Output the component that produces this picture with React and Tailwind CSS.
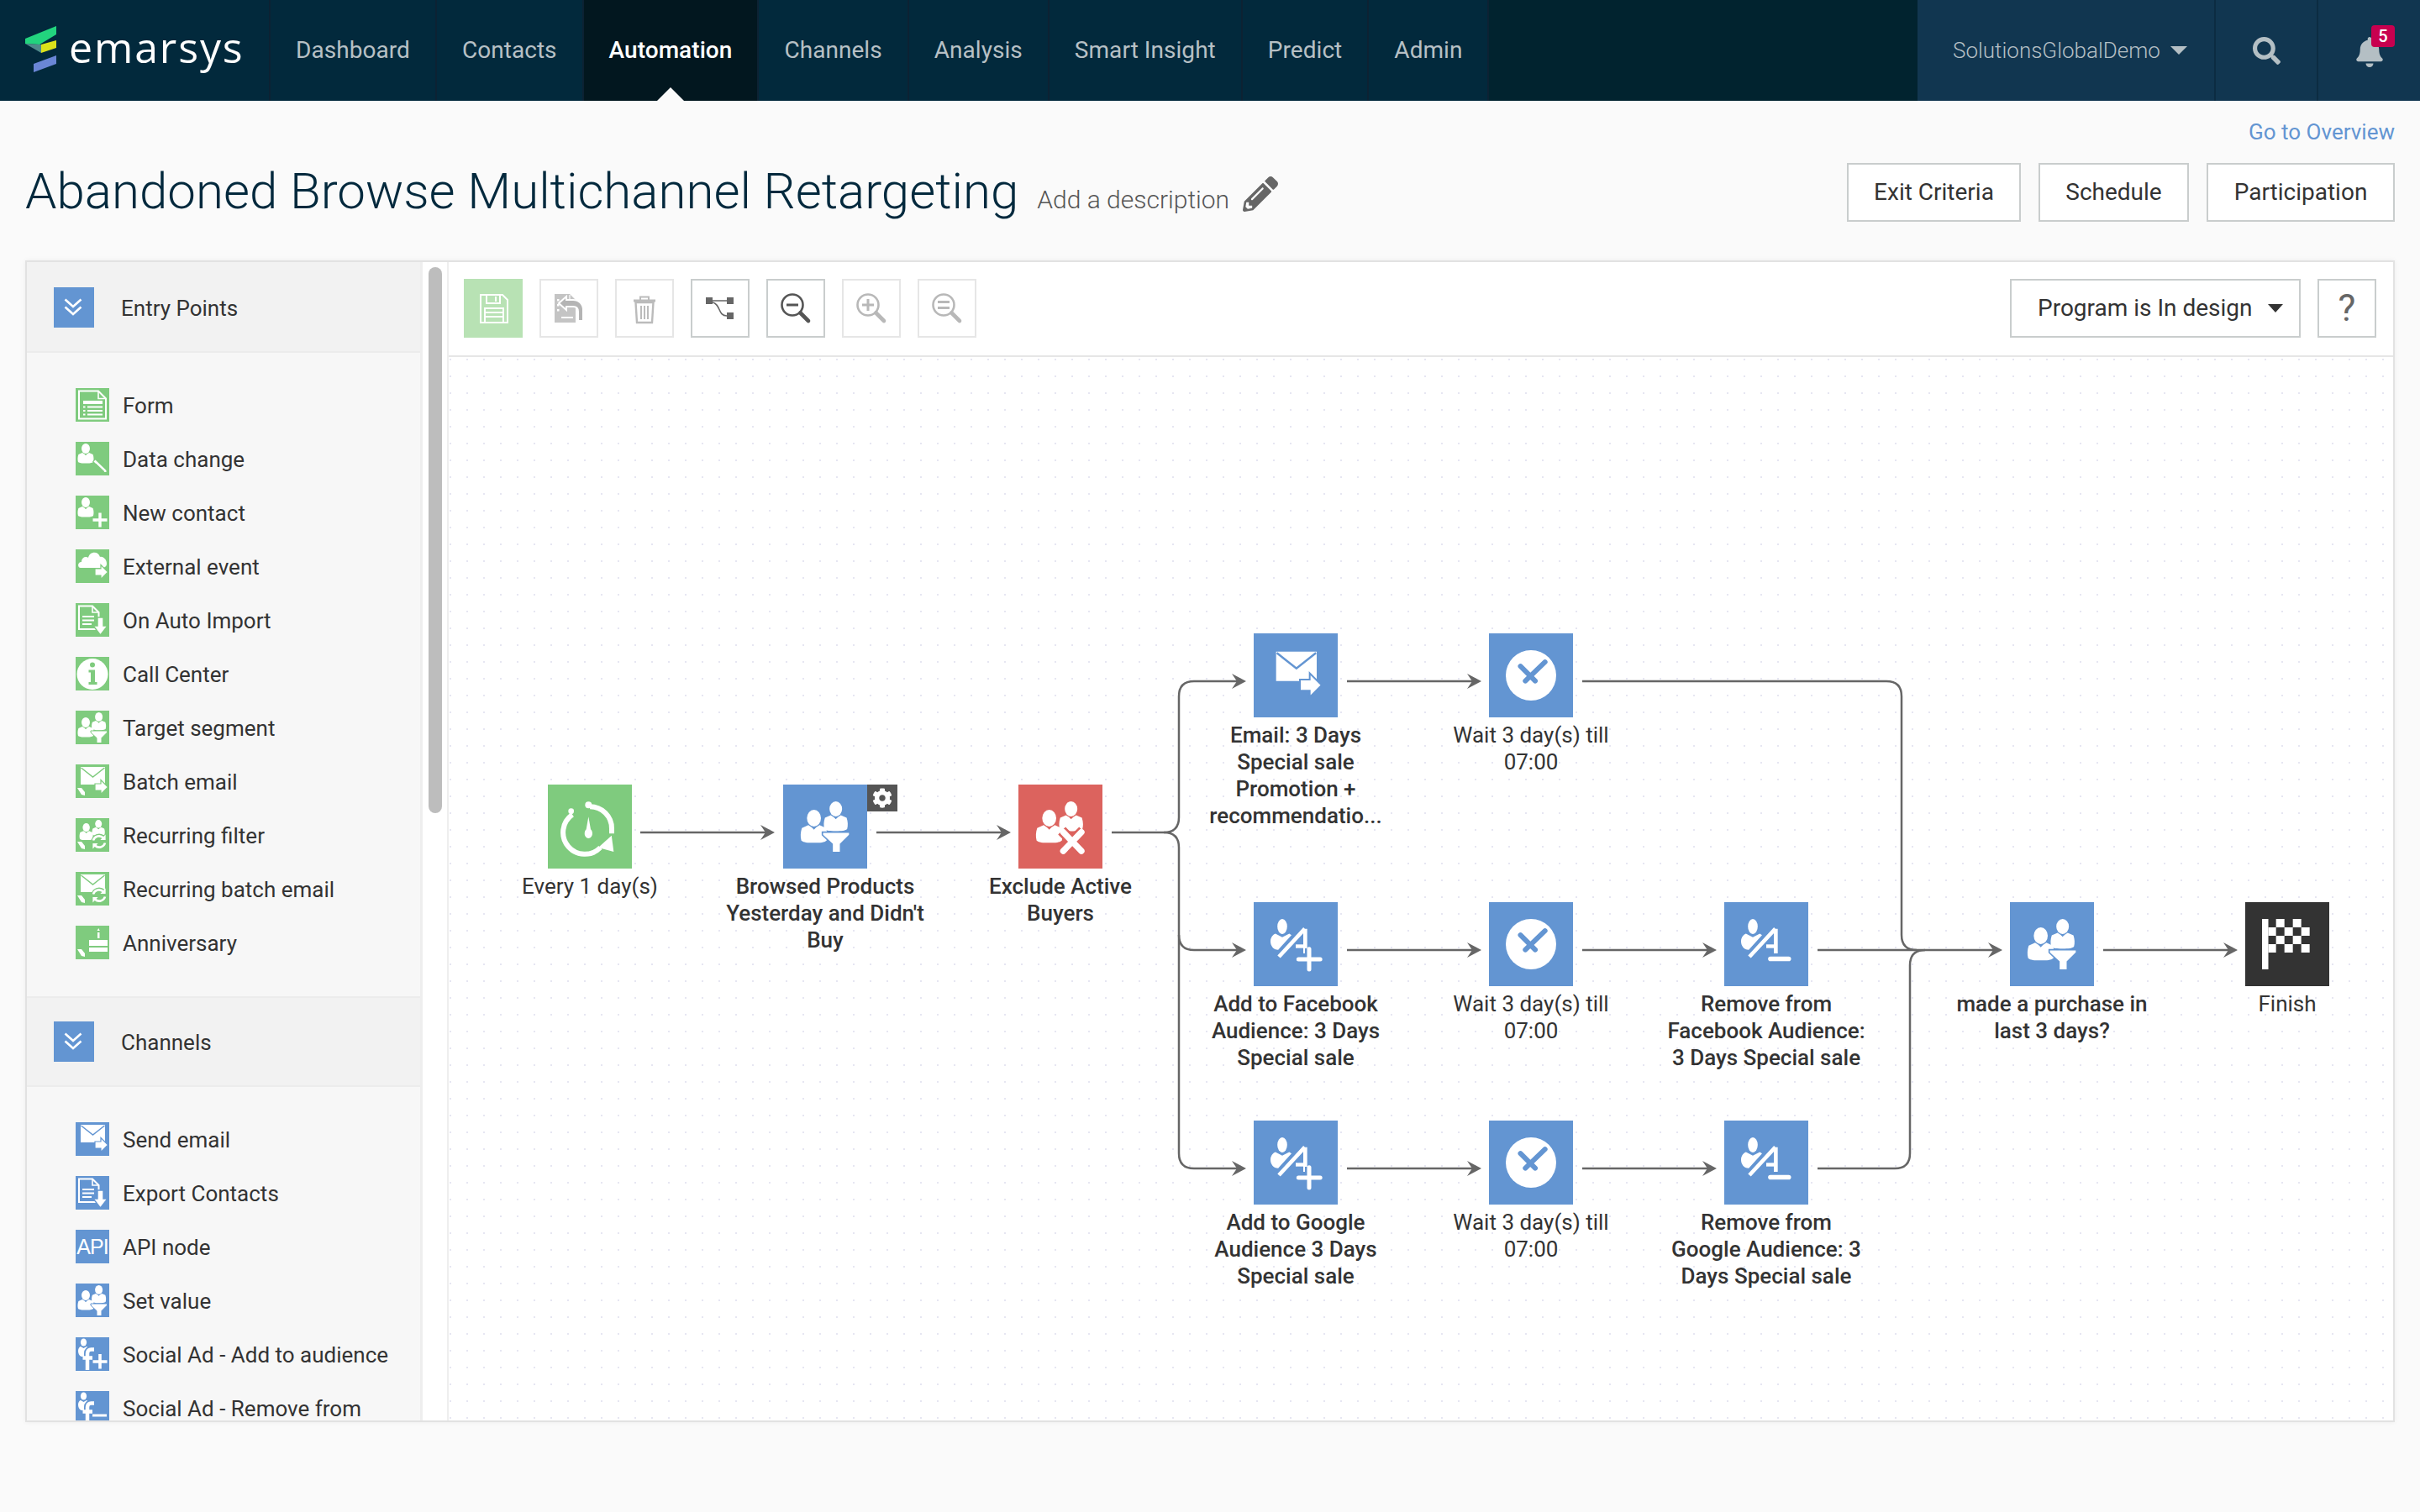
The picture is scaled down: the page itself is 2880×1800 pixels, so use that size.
import { FaBell, FaCog, FaPencilAlt, FaSearch } from "react-icons/fa";

const NAV = ["Dashboard", "Contacts", "Automation", "Channels", "Analysis", "Smart Insight", "Predict", "Admin"];

const Person = ({ x, y, s = 1, c }) => (
  <g transform={`translate(${x} ${y}) scale(${s})`}>
    <ellipse cx="9" cy="6" rx="5" ry="6" fill="#fff" />
    <path d="M0 22c-.8-3-.6-6 .4-9l4.6-2 4 2.6 4-2.6 4.6 2c1 3 1.2 6 .4 9-2 1.4-4 1.6-9 1.6s-7-.2-9-1.6z" fill="#fff" />
    <path d="M7.6 12.6h2.8l-1.4 1.6z" fill={c} />
  </g>
);

const Funnel = ({ c }) => (
  <path d="M18 24H37.5V26L31 32.5V38.5H25V32.5L18 26Z" fill="#fff" stroke={c} strokeWidth="1" />
);

const Envelope = ({ c }) => (
  <g>
    <path d="M6 3H35V24H6Z" fill="#fff" />
    <path d="M6.5 4 20.5 15 34.5 4" fill="none" stroke={c} strokeWidth="1.5" />
  </g>
);

const ArrowRight = ({ c }) => (
  <path d="M23 23H30V18.5L38.5 27 30 35.5V31H23Z" fill="#fff" stroke={c} strokeWidth="1.2" />
);

const Corner = () => <path d="M2 28H7L11 33V37L7 36Z" fill="#fff" />;

const Recycle = ({ c }) => (
  <g fill="none" stroke="#fff" strokeWidth="2.6">
    <circle cx="28" cy="28" r="9.5" fill={c} stroke="none" />
    <path d="M21 26.5A7.2 7.2 0 0 1 33 23.5" />
    <path d="M35 29.5A7.2 7.2 0 0 1 23 32.5" />
    <path d="M35.6 19.5V26H29.4Z" fill="#fff" stroke="none" />
    <path d="M20.4 36.5V30H26.6Z" fill="#fff" stroke="none" />
  </g>
);

const DocDown = ({ c }) => (
  <g>
    <path d="M4 3.5H20L27.5 11V31H4Z" fill="none" stroke="#fff" strokeWidth="2" />
    <path d="M20 3.5V11H27.5" fill="none" stroke="#fff" strokeWidth="1.6" />
    <path d="M8 16H22M8 20.5H22M8 25H19" stroke="#fff" strokeWidth="2" />
    <path d="M26 17H33V27H38L29.5 38 21 27H26Z" fill="#fff" stroke={c} strokeWidth="1.4" />
  </g>
);

const SocialF = ({ c }) => (
  <g>
    <ellipse cx="9.5" cy="6" rx="3.6" ry="4.6" fill="#fff" />
    <path d="M3 16c0-3 2-5 3-5l3.5 2 3.5-2 3 2-2 10H7C4 22 3 19 3 16z" fill="#fff" />
    <path d="M14 39V19c0-3 2-4.5 4.5-4.5H22" fill="none" stroke={c} strokeWidth="8" />
    <path d="M14 39V19c0-3 2-4.5 4.5-4.5H22M8.5 24.5H20" fill="none" stroke="#fff" strokeWidth="4.5" />
  </g>
);

const AudiencePerson = () => (
  <g>
    <ellipse cx="10.4" cy="7.4" rx="3.5" ry="5.4" fill="#fff" />
    <path d="M2 18c0-3 2-5 3.5-5.5L10.4 15l5-2.5 1.6 1-9.5 10.5C4 24 2 21 2 18z" fill="#fff" />
  </g>
);

// sidebar + node glyphs, all on a 40 box
const GLYPHS = {
  form: () => (
    <g>
      <path d="M4 3.5H27L36 12.5V36.5H4Z" fill="none" stroke="#fff" strokeWidth="2" />
      <path d="M27 3.5V12.5H36" fill="none" stroke="#fff" strokeWidth="1.6" />
      <path d="M9 15H32V19H9Z" fill="#fff" />
      <path d="M9 22.5H11.5M14 22.5H32M9 27H11.5M14 27H32M9 31.5H11.5M14 31.5H32" stroke="#fff" strokeWidth="1.8" />
    </g>
  ),
  data: ({ c }) => (
    <g>
      <Person x={3} y={2} c={c} />
      <path d="M20 23.5 23.5 20 38 33.5V37.5H33.5Z" fill={c} />
      <path d="M21.5 23.5 23.5 21.5 36.5 34V36H34.5Z" fill="#fff" />
      <path d="M24 26 34 35.5" stroke={c} strokeWidth="1" />
    </g>
  ),
  plus: ({ c }) => (
    <g>
      <Person x={3} y={2} c={c} />
      <path d="M29 20V38M20.5 29H37.5" stroke={c} strokeWidth="6" />
      <path d="M29 20.5V37.5M20.5 29H37.5" stroke="#fff" strokeWidth="3.4" />
    </g>
  ),
  cloud: ({ c }) => (
    <g>
      <path d="M6 22C2 22 2 15 7 15 7 9 13 8 15 10 17 2 27 2 29 9 31.5 8 37 11 37 17 37 21 34 22 30 22Z" fill="#fff" />
      <ArrowRight c={c} />
    </g>
  ),
  doc: ({ c }) => <DocDown c={c} />,
  info: ({ c }) => (
    <g>
      <circle cx="20" cy="20.5" r="18.5" fill="#fff" />
      <circle cx="20" cy="9.5" r="3" fill={c} />
      <path d="M15.5 15.5H23V30H25.5V33H15.5V30H18V18.5H15.5Z" fill={c} />
    </g>
  ),
  segment: ({ c }) => (
    <g>
      <Person x={3} y={8} c={c} />
      <Person x={19.5} y={2} s={0.9} c={c} />
      <Funnel c={c} />
    </g>
  ),
  batch: ({ c }) => (
    <g>
      <Envelope c={c} />
      <ArrowRight c={c} />
      <Corner />
    </g>
  ),
  recurFilter: ({ c }) => (
    <g>
      <Person x={5} y={6} s={0.85} c={c} />
      <Person x={20} y={2} s={0.8} c={c} />
      <Recycle c={c} />
      <Corner />
    </g>
  ),
  recurBatch: ({ c }) => (
    <g>
      <Envelope c={c} />
      <Recycle c={c} />
      <Corner />
    </g>
  ),
  cake: () => (
    <g>
      <path d="M26 8H28.5V15H26Z" fill="#fff" />
      <path d="M27.2 3 28.8 6H25.6Z" fill="#fff" />
      <path d="M16 17H38V24H16Z" fill="#fff" />
      <path d="M16 26H38V31H16Z" fill="#fff" />
      <Corner />
    </g>
  ),
  send: ({ c }) => (
    <g>
      <Envelope c={c} />
      <ArrowRight c={c} />
    </g>
  ),
  fbAdd: ({ c }) => (
    <g>
      <SocialF c={c} />
      <path d="M29 20V37.5M20.5 29H37.5" stroke="#fff" strokeWidth="3.6" />
    </g>
  ),
  fbRemove: ({ c }) => (
    <g>
      <SocialF c={c} />
      <path d="M20 29H37" stroke="#fff" strokeWidth="3" />
    </g>
  ),
  repeat: () => (
    <g>
      <path d="M7.5 11.5A15.5 15.5 0 1 0 27.5 35" fill="none" stroke="#fff" strokeWidth="3.6" />
      <path d="M20 5.8A15.5 15.5 0 0 1 35.6 21.5V25" fill="none" stroke="#fff" strokeWidth="3.6" />
      <circle cx="19" cy="4.6" r="2.4" fill="#fff" />
      <circle cx="6.6" cy="9" r="2" fill="#fff" />
      <path d="M26 35 35.5 26.5 37 38Z" fill="#fff" />
      <path d="M19 13 20.6 22A2.8 3.5 0 1 1 17.4 22Z" fill="#fff" />
    </g>
  ),
  exclude: ({ c }) => (
    <g>
      <Person x={3} y={8} c={c} />
      <Person x={19.5} y={2} s={0.9} c={c} />
      <path d="M21 23 36 38M36 23 21 38" stroke={c} strokeWidth="7.5" />
      <path d="M22 24 35 37.5M35 24 22 37.5" stroke="#fff" strokeWidth="4.4" strokeLinecap="round" />
    </g>
  ),
  wait: ({ c }) => (
    <g>
      <circle cx="20" cy="20" r="18" fill="#fff" />
      <path d="M30 10.5 16 24M12.5 13.5 23 24" stroke={c} strokeWidth="3.6" strokeLinecap="round" />
    </g>
  ),
  audienceAdd: ({ c }) => (
    <g>
      <AudiencePerson />
      <path d="M8 29 26.5 9 M26.8 9V26.6" fill="none" stroke="#fff" strokeWidth="2.8" />
      <path d="M20 21.5H26" stroke="#fff" strokeWidth="2.6" />
      <path d="M29.6 23V38.5M22 30.8H37.5" stroke={c} strokeWidth="6" />
      <path d="M29.6 23.5V38M22 30.8H37.5" stroke="#fff" strokeWidth="3" strokeLinecap="round" />
    </g>
  ),
  audienceRemove: () => (
    <g>
      <AudiencePerson />
      <path d="M8 29 26.5 9 M26.8 9V26.6" fill="none" stroke="#fff" strokeWidth="2.8" />
      <path d="M20 21.5H26" stroke="#fff" strokeWidth="2.6" />
      <path d="M23 30.5H36" stroke="#fff" strokeWidth="3.4" strokeLinecap="round" />
    </g>
  ),
  finish: () => (
    <g>
      <path d="M2 2H6.5V38H2Z" fill="#fff" />
      <path d="M12 2H18V8H12ZM24 2H30V8H24ZM6.5 8H12V14H6.5ZM18 8H24V14H18ZM30 8H36V14H30ZM12 14H18V20H12ZM24 14H30V20H24ZM6.5 20H12V26H6.5ZM18 20H24V26H18ZM30 20H36V26H30Z" fill="#fff" />
    </g>
  ),
};

const GREEN = "#7fcb7e";
const BLUE = "#6395d2";
const RED = "#dc635e";

const ENTRY_POINTS = [
  ["Form", "form"],
  ["Data change", "data"],
  ["New contact", "plus"],
  ["External event", "cloud"],
  ["On Auto Import", "doc"],
  ["Call Center", "info"],
  ["Target segment", "segment"],
  ["Batch email", "batch"],
  ["Recurring filter", "recurFilter"],
  ["Recurring batch email", "recurBatch"],
  ["Anniversary", "cake"],
];

const CHANNELS = [
  ["Send email", "send"],
  ["Export Contacts", "doc"],
  ["API node", "api"],
  ["Set value", "segment"],
  ["Social Ad - Add to audience", "fbAdd"],
  ["Social Ad - Remove from", "fbRemove"],
];

const HEADER_BUTTONS = [
  { label: "Exit Criteria", width: "w-[207px]" },
  { label: "Schedule", width: "w-[179px]" },
  { label: "Participation", width: "w-[224px]" },
];

// canvas starts at 534,425 in page coordinates
const OX = 534;
const OY = 425;

const NODES = [
  { x: 652, y: 934, color: GREEN, glyph: "repeat", label: ["Every 1 day(s)"] },
  { x: 932, y: 934, color: BLUE, glyph: "segment", label: ["Browsed Products", "Yesterday and Didn't", "Buy"], bold: true, gear: true },
  { x: 1212, y: 934, color: RED, glyph: "exclude", label: ["Exclude Active", "Buyers"], bold: true },
  { x: 1492, y: 754, color: BLUE, glyph: "send", label: ["Email: 3 Days", "Special sale", "Promotion +", "recommendatio..."], bold: true },
  { x: 1772, y: 754, color: BLUE, glyph: "wait", label: ["Wait 3 day(s) till", "07:00"] },
  { x: 1492, y: 1074, color: BLUE, glyph: "audienceAdd", label: ["Add to Facebook", "Audience: 3 Days", "Special sale"], bold: true },
  { x: 1772, y: 1074, color: BLUE, glyph: "wait", label: ["Wait 3 day(s) till", "07:00"] },
  { x: 2052, y: 1074, color: BLUE, glyph: "audienceRemove", label: ["Remove from", "Facebook Audience:", "3 Days Special sale"], bold: true },
  { x: 1492, y: 1334, color: BLUE, glyph: "audienceAdd", label: ["Add to Google", "Audience 3 Days", "Special sale"], bold: true },
  { x: 1772, y: 1334, color: BLUE, glyph: "wait", label: ["Wait 3 day(s) till", "07:00"] },
  { x: 2052, y: 1334, color: BLUE, glyph: "audienceRemove", label: ["Remove from", "Google Audience: 3", "Days Special sale"], bold: true },
  { x: 2392, y: 1074, color: BLUE, glyph: "segment", label: ["made a purchase in", "last 3 days?"], bold: true },
  { x: 2672, y: 1074, color: "#333333", glyph: "finish", label: ["Finish"] },
];

const LINES = [
  "M762 991H915",
  "M1043 991H1195",
  "M1323 991H1385Q1403 991 1403 973V829Q1403 811 1421 811H1475",
  "M1385 991Q1403 991 1403 1009V1113Q1403 1131 1421 1131H1475",
  "M1403 1113V1373Q1403 1391 1421 1391H1475",
  "M1603 811H1755",
  "M1603 1131H1755",
  "M1603 1391H1755",
  "M1883 1131H2035",
  "M1883 1391H2035",
  "M1883 811H2245Q2263 811 2263 829V1113Q2263 1131 2281 1131",
  "M2163 1131H2376",
  "M2163 1391H2255Q2273 1391 2273 1373V1149Q2273 1131 2291 1131",
  "M2503 1131H2656",
];

const ARROWS = [[922, 991], [1203, 991], [1483, 811], [1483, 1131], [1483, 1391], [1763, 811], [1763, 1131], [1763, 1391], [2043, 1131], [2043, 1391], [2383, 1131], [2663, 1131]];

function Glyph({ name, color }) {
  const G = GLYPHS[name];
  return <G c={color} />;
}

function ToolButton({ active, children }) {
  return (
    <div className={`w-[70px] h-[70px] border-2 bg-white flex items-center justify-center ${active ? "border-[#c9cdcd]" : "border-[#e6e6e6]"}`}>
      <svg width="70" height="70" viewBox="0 0 70 70" className="shrink-0">
        {children}
      </svg>
    </div>
  );
}

function Magnifier({ color, children }) {
  return (
    <g>
      <circle cx="31" cy="31" r="12.5" fill="none" stroke={color} strokeWidth="2.6" />
      <path d="M40.5 40.5 50 50" stroke={color} strokeWidth="4.6" strokeLinecap="round" />
      {children}
    </g>
  );
}

function SideItem({ label, glyph, color }) {
  return (
    <div className="flex items-center gap-4 h-10 shrink-0">
      <div className="w-10 h-10 shrink-0 flex items-center justify-center overflow-hidden" style={{ backgroundColor: color }}>
        {glyph === "api" ? (
          <span className="text-white text-[25px] leading-none [font-family:'Liberation_Sans',sans-serif] tracking-[-1px]">API</span>
        ) : (
          <svg width="40" height="40" viewBox="0 0 40 40">
            <Glyph name={glyph} color={color} />
          </svg>
        )}
      </div>
      <span className="pt-[2px] text-[26px] leading-8 text-[#333] whitespace-nowrap">{label}</span>
    </div>
  );
}

function SideHeader({ title, top }) {
  return (
    <div className={`h-[108px] shrink-0 flex items-start gap-8 pl-8 bg-[#f2f2f2] border-b-2 border-[#ececec] ${top ? "border-t-2 pt-[28px]" : "pt-[30px]"}`}>
      <div className="w-12 h-12 bg-[#6395d2] flex items-center justify-center">
        <svg width="48" height="48" viewBox="0 0 48 48" fill="none" stroke="#fff" strokeWidth="2.6">
          <path d="M13.5 14.5 23 23 32.5 14.5M13.5 23.5 23 32 32.5 23.5" />
        </svg>
      </div>
      <span className="text-[26px] leading-[48px] pt-[1px] text-[#333]">{title}</span>
    </div>
  );
}

function Node({ n }) {
  return (
    <div className="absolute w-[100px]" style={{ left: n.x - OX, top: n.y - OY }}>
      <div className="w-[100px] h-[100px] relative" style={{ backgroundColor: n.color }}>
        <svg width="100" height="100" viewBox="-10 -10 60 60">
          <Glyph name={n.glyph} color={n.color} />
        </svg>
        {n.gear && (
          <div className="absolute left-[100px] top-0 w-9 h-8 bg-[#555] flex items-center justify-center">
            <FaCog className="text-white text-[24px]" />
          </div>
        )}
      </div>
      <div className={`absolute left-1/2 -translate-x-1/2 top-[105px] text-center text-[26px] leading-8 text-[#333] whitespace-nowrap ${n.bold ? "font-medium" : "font-normal"}`}>
        {n.label.map((l) => (
          <div key={l}>{l}</div>
        ))}
      </div>
    </div>
  );
}

export default function App() {
  return (
    <div className="w-[2880px] min-h-[1800px] bg-[#fafafa] [font-family:Roboto,sans-serif] overflow-hidden">
      {/* Top nav */}
      <nav className="h-[120px] flex bg-[#02293c]">
        <div className="w-[322px] shrink-0 flex items-center border-r-2 border-[#0c2233] relative">
          <svg width="70" height="120" viewBox="0 0 70 120" className="shrink-0">
            <path d="M67 31V41L47 53 30 52V46Z" fill="#22d47e" />
            <path d="M30 52 49 53V63Z" fill="#4f8a8b" />
            <path d="M49 53 67 48V57L49 63Z" fill="#dce21b" />
            <path d="M67 66V76L40 86V76Z" fill="#6a86d6" />
          </svg>
          <span className="absolute left-[82px] top-[28px] text-[50px] leading-[56px] tracking-[1.9px] font-medium text-white [font-family:'Open_Sans',sans-serif]">emarsys</span>
        </div>
        {NAV.map((item) => (
          <div
            key={item}
            className={`relative flex items-center px-[30px] border-r-2 border-[#0c2233] text-[28px] tracking-[0.05px] ${item === "Automation" ? "bg-[#02171f] text-white font-medium" : "text-[#b7c0c5]"}`}
          >
            {item}
            {item === "Automation" && (
              <div className="absolute left-1/2 -translate-x-1/2 bottom-0 w-0 h-0 border-x-[16px] border-b-[16px] border-x-transparent border-b-[#fafafa]" />
            )}
          </div>
        ))}
        <div className="flex-1 bg-[#01232f]" />
        <div className="flex h-full bg-[#113650] text-[#b4bfc4]">
          <div className="w-[355px] flex items-center pl-[42px] gap-3 border-r-2 border-[#0c2c42] text-[26px] font-light">
            SolutionsGlobalDemo
            <div className="w-0 h-0 border-x-[10px] border-t-[10px] border-x-transparent border-t-[#b4bfc4]" />
          </div>
          <div className="w-[122px] flex items-center justify-center border-r-2 border-[#0c2c42]">
            <FaSearch className="text-[33px]" />
          </div>
          <div className="w-[121px] relative flex items-center justify-center">
            <FaBell className="text-[36px] mt-1" />
            <div className="absolute left-[63px] top-[30px] w-[28px] h-[26px] rounded-[4px] bg-[#c8004f] text-white text-[20px] leading-[26px] font-medium text-center">5</div>
          </div>
        </div>
      </nav>

      {/* Title area */}
      <div className="px-[30px]">
        <div className="pt-[21px] text-right text-[26px] leading-8 text-[#6395d2]">Go to Overview</div>
        <div className="mt-[21px] h-[70px] flex items-center justify-between">
          <div className="flex items-center">
            <h1 className="-mt-[2px] text-[60px] leading-[70px] font-light text-[#03293d] whitespace-nowrap">Abandoned Browse Multichannel Retargeting</h1>
            <span className="ml-[22px] mt-4 text-[30px] text-[#555] font-light">Add a description</span>
            <FaPencilAlt className="ml-[16px] mt-1 text-[42px] text-[#666]" />
          </div>
          <div className="flex gap-[21px]">
            {HEADER_BUTTONS.map((b) => (
              <div key={b.label} className={`h-[70px] ${b.width} flex items-center justify-center border-2 border-[#c9cdcd] bg-white text-[28px] text-[#333]`}>{b.label}</div>
            ))}
          </div>
        </div>

        {/* Main panel */}
        <div className="mt-[46px] h-[1383px] flex border-2 border-[#e2e2e2] bg-white shadow-[0_0_6px_rgba(0,0,0,0.06)]">
          <div className="w-[471px] shrink-0 bg-[#f7f7f7] border-r-[3px] border-[#eeeeee] overflow-hidden flex flex-col">
            <SideHeader title="Entry Points" />
            <div className="pl-[58px] pt-[42px] pb-[44px] flex flex-col gap-6">
              {ENTRY_POINTS.map(([l, g]) => (
                <SideItem key={l} label={l} glyph={g} color={GREEN} />
              ))}
            </div>
            <SideHeader title="Channels" top />
            <div className="pl-[58px] pt-[42px] flex flex-col gap-6">
              {CHANNELS.map(([l, g]) => (
                <SideItem key={l} label={l} glyph={g} color={BLUE} />
              ))}
            </div>
          </div>
          <div className="w-[29px] shrink-0 bg-white pl-[7px] pt-[6px]">
            <div className="w-4 h-[650px] rounded-full bg-[#bdbdbd]" />
          </div>
          <div className="flex-1 border-l-2 border-[#eeeeee] flex flex-col min-w-0">
            {/* Toolbar */}
            <div className="h-[113px] shrink-0 border-b-2 border-[#e6e6e6] flex items-start justify-between pt-5 pl-[18px] pr-[20px]">
              <div className="flex gap-5">
                <div className="w-[70px] h-[70px] bg-[#b8e2b4] flex items-center justify-center">
                  <svg width="70" height="70" viewBox="0 0 70 70" fill="none" stroke="#fff" strokeWidth="2">
                    <path d="M20 19H46L52 25V52H20Z" />
                    <path d="M27 19V29H43V19M38 21V27" />
                    <path d="M25 35H47V52H25ZM25 40H47M25 45H47" />
                  </svg>
                </div>
                <ToolButton>
                  <path d="M18 18H36L43 25V52H18Z" fill="#c4c4c4" />
                  <path d="M21 24h2.5v2.5H21zM21 30h2.5v2.5H21zM21 36h2.5v2.5H21zM26 45h14v2H26z" fill="#fff" />
                  <path d="M36 19v6.5h6.5" fill="none" stroke="#fff" strokeWidth="1.2" />
                  <path d="M23 29 32 21V25H40C47 25 52 30 52 37V50H46V39C46 35 44 33 40 33H32V37Z" fill="#b4b4b4" stroke="#fff" strokeWidth="2" />
                </ToolButton>
                <ToolButton>
                  <path d="M22 26H48" stroke="#bbb" strokeWidth="3" />
                  <path d="M30 25V21.5H40V25" fill="none" stroke="#bbb" strokeWidth="2" />
                  <path d="M24.5 28H45.5L44 52H26Z" fill="none" stroke="#bbb" strokeWidth="2.4" />
                  <path d="M31 32V48M35 32V48M39 32V48" stroke="#bbb" strokeWidth="2" />
                </ToolButton>
                <ToolButton active>
                  <path d="M18 22H26V30H18ZM43 22H51V30H43ZM43 40H51V48H43Z" fill="#666" />
                  <path d="M26 26H43M26 28C36 30 32 44 43 44" fill="none" stroke="#666" strokeWidth="1.6" />
                </ToolButton>
                <ToolButton active>
                  <Magnifier color="#555">
                    <path d="M24 31H38" stroke="#555" strokeWidth="3" />
                  </Magnifier>
                </ToolButton>
                <ToolButton>
                  <Magnifier color="#b8b8b8">
                    <path d="M24 31H38M31 24V38" stroke="#b8b8b8" strokeWidth="3" />
                  </Magnifier>
                </ToolButton>
                <ToolButton>
                  <Magnifier color="#b8b8b8">
                    <path d="M24 27.5H38M24 34.5H38" stroke="#b8b8b8" strokeWidth="3" />
                  </Magnifier>
                </ToolButton>
              </div>
              <div className="flex gap-5">
                <div className="w-[346px] h-[70px] border-2 border-[#c9cdcd] bg-white flex items-center pl-[31px] gap-[18px] text-[28px] text-[#333] whitespace-nowrap">
                  Program is In design
                  <div className="w-0 h-0 border-x-[9px] border-t-[10px] border-x-transparent border-t-[#333]" />
                </div>
                <div className="w-[70px] h-[70px] border-2 border-[#c9cdcd] bg-white flex items-center justify-center text-[44px] text-[#666]">?</div>
              </div>
            </div>

            {/* Canvas */}
            <div className="flex-1 relative overflow-hidden bg-white bg-[radial-gradient(circle,#e6e6f2_1px,transparent_1.3px)] bg-[length:20px_20px] bg-[position:12px_13px]">
              <svg className="absolute inset-0 w-full h-full" viewBox={`${OX} ${OY} 2314 1266`}>
                <g fill="none" stroke="#666" strokeWidth="2.5">
                  {LINES.map((d) => (
                    <path key={d} d={d} />
                  ))}
                </g>
                {ARROWS.map(([x, y]) => (
                  <path key={`${x}-${y}`} d={`M${x} ${y}L${x - 17} ${y - 9}L${x - 11} ${y}L${x - 17} ${y + 9}Z`} fill="#666" />
                ))}
              </svg>
              {NODES.map((n) => (
                <Node key={`${n.x}-${n.y}`} n={n} />
              ))}
            </div>
          </div>
        </div>
      </div>
    </div>
  );
}
